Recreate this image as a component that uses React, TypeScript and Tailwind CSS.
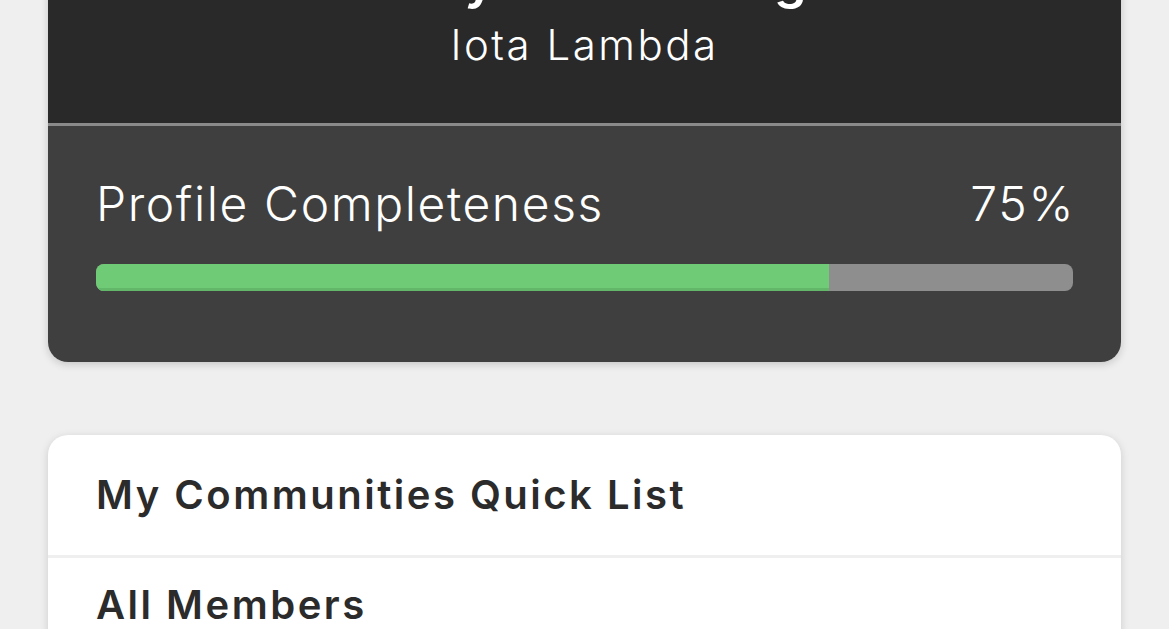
import React from "react";

const PROGRESS = 75;

function MenuRow({ label, first }: { label: string; first?: boolean }) {
  return (
    <div
      className={`px-12 ${first ? "pt-[37px] pb-[37px]" : "pt-[24px] pb-[36px] border-t-[3px] border-[#efefef]"}`}
    >
      <span className="block text-[40px] leading-[46px] font-semibold tracking-[2.5px] text-[#2b2b2b]">
        {label}
      </span>
    </div>
  );
}

export default function App() {
  return (
    <div className="min-h-screen bg-[#efefef] font-['Inter',sans-serif] overflow-hidden">
      <div className="flex flex-col px-12">
        {/* Profile card */}
        <div className="-mt-[60px] rounded-[20px] overflow-hidden shadow-[0_2px_8px_rgba(0,0,0,0.18)]">
          <div className="bg-[#292929] pt-[10px] pb-[54px] flex flex-col items-center text-white">
            <span className="text-[52px] leading-[60px] font-semibold tracking-[3px]">Kelly Armstrong</span>
            <span className="mt-[11px] text-[42px] leading-[48px] font-light tracking-[2.5px]">Iota Lambda</span>
          </div>
          <div className="bg-[#3f3f3f] border-t-[3px] border-[#8a8a8a] px-12 pt-[50px] pb-[71px]">
            <div className="flex items-center justify-between text-white text-[48px] leading-[56px] font-light tracking-[1.6px]">
              <span>Profile Completeness</span>
              <span className="-mr-[2px]">{PROGRESS}%</span>
            </div>
            <div className="mt-[32px] h-[27px] rounded-[8px] bg-[#8e8e8e] overflow-hidden flex">
              <div
                className="h-full bg-[#6fcb75] border-b-[3px] border-[#62b868]"
                style={{ width: `${PROGRESS}%` }}
              />
            </div>
          </div>
        </div>

        {/* Quick links card */}
        <div className="mt-[73px] rounded-[20px] bg-white shadow-[0_2px_8px_rgba(0,0,0,0.15)]">
          <MenuRow label="My Communities Quick List" first />
          <MenuRow label="All Members" />
        </div>
      </div>
    </div>
  );
}
